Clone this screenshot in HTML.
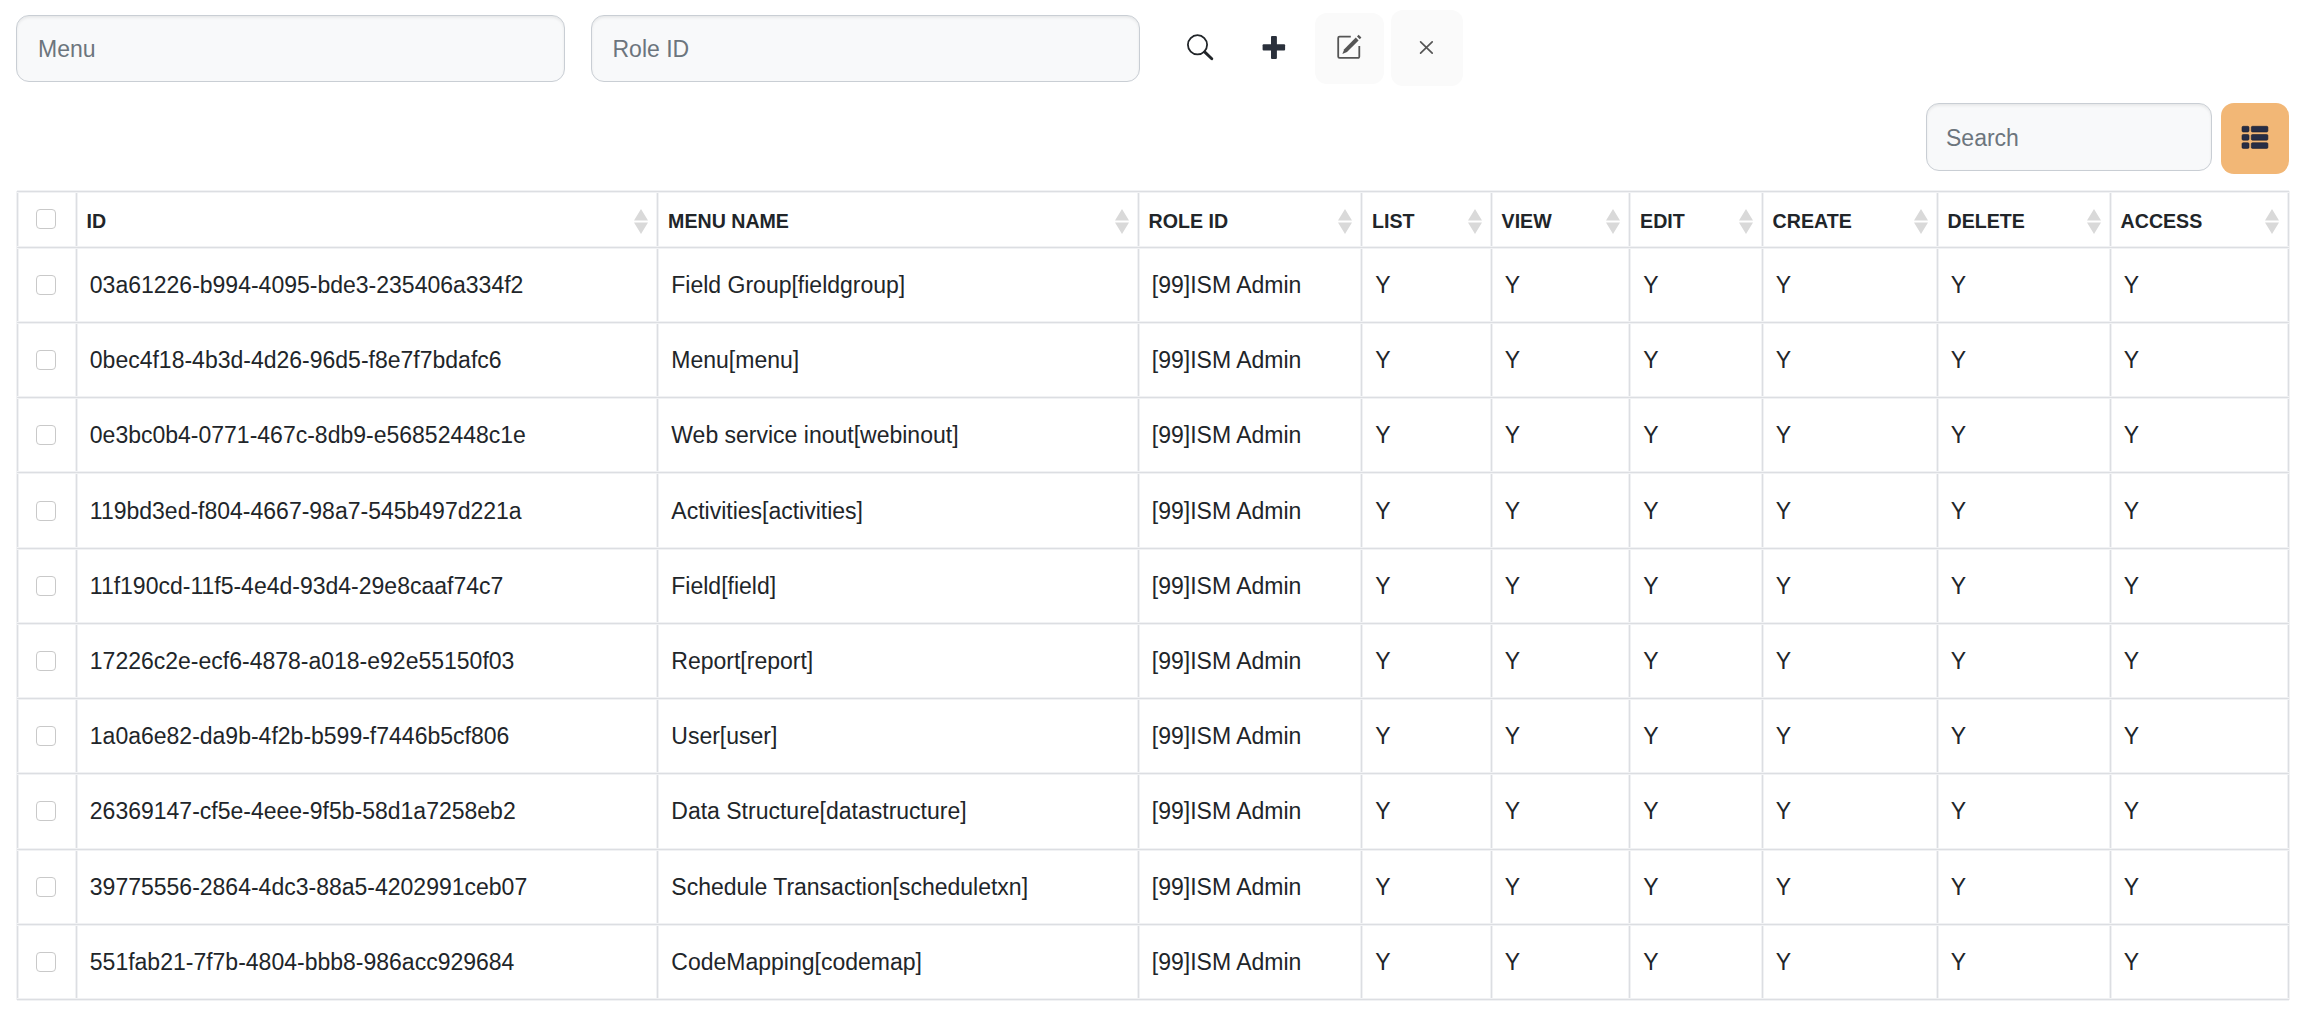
<!DOCTYPE html>
<html><head><meta charset="utf-8"><title>Role Menu</title>
<style>
*{margin:0;padding:0;box-sizing:border-box}
html,body{width:2304px;height:1011px;overflow:hidden;background:#fff;
 font-family:"Liberation Sans",sans-serif;color:#212529}
.a{position:absolute}
.t{position:absolute;white-space:nowrap;font-size:23.0px;line-height:23.0px;color:#212529}
.h{position:absolute;white-space:nowrap;font-size:19.6px;line-height:19.6px;font-weight:700;color:#212529}
.inp{position:absolute;background:#f8f9fa;border:1.67px solid #c9ced4;border-radius:13px;
 box-shadow:inset 0 1.67px 3px rgba(0,0,0,.075)}
.ph{position:absolute;white-space:nowrap;font-size:23.0px;line-height:23.0px;color:#6c757d}
.cb{position:absolute;width:20px;height:20px;border:1.67px solid #c9c9c9;border-radius:4px;background:#fff}
.vl{position:absolute;width:1px;background:#dcdee2;box-shadow:-1px 0 0 #f1f2f4,1px 0 0 #f1f2f4}
.hl{position:absolute;height:1px;background:#dcdee2;box-shadow:0 -1px 0 #f1f2f4,0 1px 0 #f1f2f4}
</style></head>
<body>
<div class="inp" style="left:16px;top:15px;width:548.5px;height:66.7px"></div>
<div class="ph" style="left:38px;top:37.93px">Menu</div>
<div class="inp" style="left:591.4px;top:15px;width:548.5px;height:66.7px"></div>
<div class="ph" style="left:612.5px;top:37.93px">Role ID</div>
<svg class="a" style="left:1180px;top:28px" width="40" height="40" viewBox="1180 28 40 40">
<circle cx="1197.5" cy="44.8" r="9.6" fill="none" stroke="#212529" stroke-width="1.8"/>
<line x1="1204.6" y1="51.9" x2="1211.8" y2="58.8" stroke="#212529" stroke-width="2.9" stroke-linecap="round"/>
</svg>
<svg class="a" style="left:1255px;top:30px" width="40" height="36" viewBox="1255 30 40 36">
<rect x="1262.6" y="44.3" width="22.5" height="6.2" rx="1" fill="#2a303b"/>
<rect x="1271" y="36.1" width="5.9" height="22.8" rx="1" fill="#2a303b"/>
</svg>
<div class="a" style="left:1315px;top:12.8px;width:68.8px;height:71.4px;border-radius:12px;background:#fafafa"></div>
<svg class="a" style="left:1330px;top:28px" width="40" height="40" viewBox="1330 28 40 40">
<path d="M1350.8 36.6 H1339.5 a1.3 1.3 0 0 0 -1.3 1.3 V56.6 a1.3 1.3 0 0 0 1.3 1.3 H1358 a1.3 1.3 0 0 0 1.3 -1.3 V45.9" fill="none" stroke="#555" stroke-width="1.8"/>
<path d="M1342.4 54 L1344.2 49.2 L1355.8 37.6 L1358.6 40.4 L1347 52 Z" fill="#555"/>
<path d="M1357 36.4 L1358.6 34.8 L1361.4 37.6 L1359.8 39.2 Z" fill="#555"/>
</svg>
<div class="a" style="left:1391px;top:9.9px;width:72px;height:76px;border-radius:12px;background:#fafafa"></div>
<svg class="a" style="left:1410px;top:32px" width="30" height="30" viewBox="1410 32 30 30">
<path d="M1420.6 41.8 L1432.2 53.1 M1432.2 41.8 L1420.6 53.1" stroke="#555" stroke-width="1.7" stroke-linecap="round"/>
</svg>
<div class="inp" style="left:1926px;top:103.4px;width:285.6px;height:67.2px"></div>
<div class="ph" style="left:1946px;top:127.13px">Search</div>
<div class="a" style="left:2220.5px;top:103.4px;width:68.4px;height:70.2px;border-radius:13px;background:#f2b776"></div>
<svg class="a" style="left:2235px;top:120px" width="40" height="36" viewBox="2235 120 40 36">
<g fill="#272d45" stroke="#1d2030" stroke-width="0.6">
<rect x="2242" y="126.3" width="7" height="5.7" rx="1.2"/>
<rect x="2251.3" y="126.3" width="16.6" height="5.7" rx="1.2"/>
<rect x="2242" y="134.5" width="7" height="5.7" rx="1.2"/>
<rect x="2251.3" y="134.5" width="16.6" height="5.7" rx="1.2"/>
<rect x="2242" y="142.7" width="7" height="5.7" rx="1.2"/>
<rect x="2251.3" y="142.7" width="16.6" height="5.7" rx="1.2"/>
</g></svg>
<div class="vl" style="left:17px;top:191px;height:809px"></div>
<div class="vl" style="left:76px;top:191px;height:809px"></div>
<div class="vl" style="left:657px;top:191px;height:809px"></div>
<div class="vl" style="left:1138px;top:191px;height:809px"></div>
<div class="vl" style="left:1361px;top:191px;height:809px"></div>
<div class="vl" style="left:1491px;top:191px;height:809px"></div>
<div class="vl" style="left:1629px;top:191px;height:809px"></div>
<div class="vl" style="left:1762px;top:191px;height:809px"></div>
<div class="vl" style="left:1937px;top:191px;height:809px"></div>
<div class="vl" style="left:2110px;top:191px;height:809px"></div>
<div class="vl" style="left:2288px;top:191px;height:809px"></div>
<div class="hl" style="left:17px;top:191px;width:2272px"></div>
<div class="hl" style="left:17px;top:247px;width:2272px"></div>
<div class="hl" style="left:17px;top:322px;width:2272px"></div>
<div class="hl" style="left:17px;top:397px;width:2272px"></div>
<div class="hl" style="left:17px;top:472px;width:2272px"></div>
<div class="hl" style="left:17px;top:548px;width:2272px"></div>
<div class="hl" style="left:17px;top:623px;width:2272px"></div>
<div class="hl" style="left:17px;top:698px;width:2272px"></div>
<div class="hl" style="left:17px;top:773px;width:2272px"></div>
<div class="hl" style="left:17px;top:849px;width:2272px"></div>
<div class="hl" style="left:17px;top:924px;width:2272px"></div>
<div class="hl" style="left:17px;top:999px;width:2272px"></div>
<div class="cb" style="left:36.3px;top:209.32px"></div>
<div class="h" style="left:86.60px;top:212.21px">ID</div>
<svg class="a" style="left:633.00px;top:207px" width="16" height="30" viewBox="0 0 16 30">
<path d="M8 2 L15 13.6 H1 Z M8 27 L15 15.6 H1 Z" fill="#d9d9d9"/></svg>
<div class="h" style="left:668.10px;top:212.21px">MENU NAME</div>
<svg class="a" style="left:1113.50px;top:207px" width="16" height="30" viewBox="0 0 16 30">
<path d="M8 2 L15 13.6 H1 Z M8 27 L15 15.6 H1 Z" fill="#d9d9d9"/></svg>
<div class="h" style="left:1148.60px;top:212.21px">ROLE ID</div>
<svg class="a" style="left:1337.00px;top:207px" width="16" height="30" viewBox="0 0 16 30">
<path d="M8 2 L15 13.6 H1 Z M8 27 L15 15.6 H1 Z" fill="#d9d9d9"/></svg>
<div class="h" style="left:1372.10px;top:212.21px">LIST</div>
<svg class="a" style="left:1466.50px;top:207px" width="16" height="30" viewBox="0 0 16 30">
<path d="M8 2 L15 13.6 H1 Z M8 27 L15 15.6 H1 Z" fill="#d9d9d9"/></svg>
<div class="h" style="left:1501.60px;top:212.21px">VIEW</div>
<svg class="a" style="left:1605.00px;top:207px" width="16" height="30" viewBox="0 0 16 30">
<path d="M8 2 L15 13.6 H1 Z M8 27 L15 15.6 H1 Z" fill="#d9d9d9"/></svg>
<div class="h" style="left:1640.10px;top:212.21px">EDIT</div>
<svg class="a" style="left:1737.50px;top:207px" width="16" height="30" viewBox="0 0 16 30">
<path d="M8 2 L15 13.6 H1 Z M8 27 L15 15.6 H1 Z" fill="#d9d9d9"/></svg>
<div class="h" style="left:1772.60px;top:212.21px">CREATE</div>
<svg class="a" style="left:1912.50px;top:207px" width="16" height="30" viewBox="0 0 16 30">
<path d="M8 2 L15 13.6 H1 Z M8 27 L15 15.6 H1 Z" fill="#d9d9d9"/></svg>
<div class="h" style="left:1947.60px;top:212.21px">DELETE</div>
<svg class="a" style="left:2085.50px;top:207px" width="16" height="30" viewBox="0 0 16 30">
<path d="M8 2 L15 13.6 H1 Z M8 27 L15 15.6 H1 Z" fill="#d9d9d9"/></svg>
<div class="h" style="left:2120.60px;top:212.21px">ACCESS</div>
<svg class="a" style="left:2263.70px;top:207px" width="16" height="30" viewBox="0 0 16 30">
<path d="M8 2 L15 13.6 H1 Z M8 27 L15 15.6 H1 Z" fill="#d9d9d9"/></svg>
<div class="cb" style="left:36.3px;top:274.86px"></div>
<div class="t" style="left:89.80px;top:273.88px">03a61226-b994-4095-bde3-235406a334f2</div>
<div class="t" style="left:671.30px;top:273.88px">Field Group[fieldgroup]</div>
<div class="t" style="left:1151.80px;top:273.88px">[99]ISM Admin</div>
<div class="t" style="left:1375.30px;top:273.88px">Y</div>
<div class="t" style="left:1504.80px;top:273.88px">Y</div>
<div class="t" style="left:1643.30px;top:273.88px">Y</div>
<div class="t" style="left:1775.80px;top:273.88px">Y</div>
<div class="t" style="left:1950.80px;top:273.88px">Y</div>
<div class="t" style="left:2123.80px;top:273.88px">Y</div>
<div class="cb" style="left:36.3px;top:350.09px"></div>
<div class="t" style="left:89.80px;top:349.11px">0bec4f18-4b3d-4d26-96d5-f8e7f7bdafc6</div>
<div class="t" style="left:671.30px;top:349.11px">Menu[menu]</div>
<div class="t" style="left:1151.80px;top:349.11px">[99]ISM Admin</div>
<div class="t" style="left:1375.30px;top:349.11px">Y</div>
<div class="t" style="left:1504.80px;top:349.11px">Y</div>
<div class="t" style="left:1643.30px;top:349.11px">Y</div>
<div class="t" style="left:1775.80px;top:349.11px">Y</div>
<div class="t" style="left:1950.80px;top:349.11px">Y</div>
<div class="t" style="left:2123.80px;top:349.11px">Y</div>
<div class="cb" style="left:36.3px;top:425.31px"></div>
<div class="t" style="left:89.80px;top:424.33px">0e3bc0b4-0771-467c-8db9-e56852448c1e</div>
<div class="t" style="left:671.30px;top:424.33px">Web service inout[webinout]</div>
<div class="t" style="left:1151.80px;top:424.33px">[99]ISM Admin</div>
<div class="t" style="left:1375.30px;top:424.33px">Y</div>
<div class="t" style="left:1504.80px;top:424.33px">Y</div>
<div class="t" style="left:1643.30px;top:424.33px">Y</div>
<div class="t" style="left:1775.80px;top:424.33px">Y</div>
<div class="t" style="left:1950.80px;top:424.33px">Y</div>
<div class="t" style="left:2123.80px;top:424.33px">Y</div>
<div class="cb" style="left:36.3px;top:500.54px"></div>
<div class="t" style="left:89.80px;top:499.56px">119bd3ed-f804-4667-98a7-545b497d221a</div>
<div class="t" style="left:671.30px;top:499.56px">Activities[activities]</div>
<div class="t" style="left:1151.80px;top:499.56px">[99]ISM Admin</div>
<div class="t" style="left:1375.30px;top:499.56px">Y</div>
<div class="t" style="left:1504.80px;top:499.56px">Y</div>
<div class="t" style="left:1643.30px;top:499.56px">Y</div>
<div class="t" style="left:1775.80px;top:499.56px">Y</div>
<div class="t" style="left:1950.80px;top:499.56px">Y</div>
<div class="t" style="left:2123.80px;top:499.56px">Y</div>
<div class="cb" style="left:36.3px;top:575.76px"></div>
<div class="t" style="left:89.80px;top:574.78px">11f190cd-11f5-4e4d-93d4-29e8caaf74c7</div>
<div class="t" style="left:671.30px;top:574.78px">Field[field]</div>
<div class="t" style="left:1151.80px;top:574.78px">[99]ISM Admin</div>
<div class="t" style="left:1375.30px;top:574.78px">Y</div>
<div class="t" style="left:1504.80px;top:574.78px">Y</div>
<div class="t" style="left:1643.30px;top:574.78px">Y</div>
<div class="t" style="left:1775.80px;top:574.78px">Y</div>
<div class="t" style="left:1950.80px;top:574.78px">Y</div>
<div class="t" style="left:2123.80px;top:574.78px">Y</div>
<div class="cb" style="left:36.3px;top:650.99px"></div>
<div class="t" style="left:89.80px;top:650.01px">17226c2e-ecf6-4878-a018-e92e55150f03</div>
<div class="t" style="left:671.30px;top:650.01px">Report[report]</div>
<div class="t" style="left:1151.80px;top:650.01px">[99]ISM Admin</div>
<div class="t" style="left:1375.30px;top:650.01px">Y</div>
<div class="t" style="left:1504.80px;top:650.01px">Y</div>
<div class="t" style="left:1643.30px;top:650.01px">Y</div>
<div class="t" style="left:1775.80px;top:650.01px">Y</div>
<div class="t" style="left:1950.80px;top:650.01px">Y</div>
<div class="t" style="left:2123.80px;top:650.01px">Y</div>
<div class="cb" style="left:36.3px;top:726.21px"></div>
<div class="t" style="left:89.80px;top:725.23px">1a0a6e82-da9b-4f2b-b599-f7446b5cf806</div>
<div class="t" style="left:671.30px;top:725.23px">User[user]</div>
<div class="t" style="left:1151.80px;top:725.23px">[99]ISM Admin</div>
<div class="t" style="left:1375.30px;top:725.23px">Y</div>
<div class="t" style="left:1504.80px;top:725.23px">Y</div>
<div class="t" style="left:1643.30px;top:725.23px">Y</div>
<div class="t" style="left:1775.80px;top:725.23px">Y</div>
<div class="t" style="left:1950.80px;top:725.23px">Y</div>
<div class="t" style="left:2123.80px;top:725.23px">Y</div>
<div class="cb" style="left:36.3px;top:801.44px"></div>
<div class="t" style="left:89.80px;top:800.46px">26369147-cf5e-4eee-9f5b-58d1a7258eb2</div>
<div class="t" style="left:671.30px;top:800.46px">Data Structure[datastructure]</div>
<div class="t" style="left:1151.80px;top:800.46px">[99]ISM Admin</div>
<div class="t" style="left:1375.30px;top:800.46px">Y</div>
<div class="t" style="left:1504.80px;top:800.46px">Y</div>
<div class="t" style="left:1643.30px;top:800.46px">Y</div>
<div class="t" style="left:1775.80px;top:800.46px">Y</div>
<div class="t" style="left:1950.80px;top:800.46px">Y</div>
<div class="t" style="left:2123.80px;top:800.46px">Y</div>
<div class="cb" style="left:36.3px;top:876.66px"></div>
<div class="t" style="left:89.80px;top:875.68px">39775556-2864-4dc3-88a5-4202991ceb07</div>
<div class="t" style="left:671.30px;top:875.68px">Schedule Transaction[scheduletxn]</div>
<div class="t" style="left:1151.80px;top:875.68px">[99]ISM Admin</div>
<div class="t" style="left:1375.30px;top:875.68px">Y</div>
<div class="t" style="left:1504.80px;top:875.68px">Y</div>
<div class="t" style="left:1643.30px;top:875.68px">Y</div>
<div class="t" style="left:1775.80px;top:875.68px">Y</div>
<div class="t" style="left:1950.80px;top:875.68px">Y</div>
<div class="t" style="left:2123.80px;top:875.68px">Y</div>
<div class="cb" style="left:36.3px;top:951.89px"></div>
<div class="t" style="left:89.80px;top:950.91px">551fab21-7f7b-4804-bbb8-986acc929684</div>
<div class="t" style="left:671.30px;top:950.91px">CodeMapping[codemap]</div>
<div class="t" style="left:1151.80px;top:950.91px">[99]ISM Admin</div>
<div class="t" style="left:1375.30px;top:950.91px">Y</div>
<div class="t" style="left:1504.80px;top:950.91px">Y</div>
<div class="t" style="left:1643.30px;top:950.91px">Y</div>
<div class="t" style="left:1775.80px;top:950.91px">Y</div>
<div class="t" style="left:1950.80px;top:950.91px">Y</div>
<div class="t" style="left:2123.80px;top:950.91px">Y</div>
</body></html>
